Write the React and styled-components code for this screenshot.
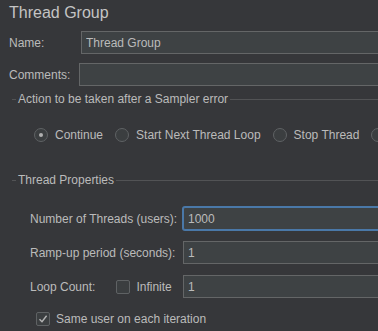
import React, { useState } from "react";
import styled, { createGlobalStyle } from "styled-components";

const GlobalStyle = createGlobalStyle`
  html, body {
    margin: 0;
    padding: 0;
    background: #36373a;
    overflow: hidden;
  }
  body {
    font-family: "Liberation Sans", Arial, sans-serif;
    font-size: 12px;
    color: #bbbbbb;
  }
`;

const Panel = styled.div`
  width: 420px;
  height: 331px;
  padding: 3px 0 0 9px;
  box-sizing: border-box;
  white-space: nowrap;
`;

const Title = styled.h1`
  margin: 0;
  font-size: 16px;
  font-weight: normal;
  line-height: 20px;
  color: #c4c4c4;
`;

const FieldRow = styled.div`
  display: flex;
  align-items: center;
  margin-top: ${(p) => p.$top}px;
`;

const Label = styled.label`
  width: ${(p) => p.$width}px;
  flex-shrink: 0;
`;

const Input = styled.input`
  flex: 1;
  min-width: 0;
  height: 23px;
  box-sizing: border-box;
  margin: 0;
  padding: 0 4px;
  background: #3e4244;
  border: 1px solid ${(p) => (p.$focus ? "#4a78a8" : "#646667")};
  box-shadow: ${(p) => (p.$focus ? "0 0 0 1px #4a78a8" : "none")};
  border-radius: ${(p) => (p.$focus ? "2px" : "0")};
  font-family: inherit;
  font-size: 12px;
  color: #bbbbbb;
  outline: none;
`;

const Group = styled.section`
  margin-top: ${(p) => p.$top}px;
`;

const Legend = styled.div`
  display: flex;
  align-items: center;
  gap: 2px;
  height: 16px;
  &::before {
    content: "";
    width: 4px;
    margin-left: 3px;
    border-top: 1px solid #525355;
  }
  &::after {
    content: "";
    flex: 1;
    border-top: 1px solid #525355;
  }
`;

const RadioRow = styled.div`
  display: flex;
  align-items: center;
  margin: 20px 0 0 25px;
  height: 16px;
`;

const RadioItem = styled.label`
  display: flex;
  align-items: center;
  gap: 7px;
  margin-right: 12px;
`;

const RadioCircle = styled.span`
  width: 14px;
  height: 14px;
  box-sizing: border-box;
  border-radius: 50%;
  border: 1px solid #5f6264;
  background: #3b3e40;
  display: flex;
  align-items: center;
  justify-content: center;
  &::after {
    content: "";
    width: 4px;
    height: 4px;
    border-radius: 50%;
    background: ${(p) => (p.$on ? "#b0b0b0" : "transparent")};
  }
`;

const PropsGrid = styled.div`
  display: grid;
  grid-template-columns: 153px 1fr;
  row-gap: 11px;
  align-items: center;
  margin: 19px 0 0 21px;
`;

const Inline = styled.div`
  display: flex;
  align-items: center;
`;

const CheckItem = styled.label`
  display: flex;
  align-items: center;
  gap: 6px;
  margin-left: ${(p) => p.$left || 0}px;
`;

const Box = styled.span`
  width: 14px;
  height: 14px;
  box-sizing: border-box;
  border: 1px solid #5f6264;
  border-radius: 2px;
  background: #3b3e40;
  display: flex;
  align-items: center;
  justify-content: center;
`;

const SameUser = styled.div`
  margin: 14px 0 0 27px;
`;

const Radio = ({ on, children }) => (
  <RadioItem>
    <RadioCircle $on={on} />
    {children}
  </RadioItem>
);

const Check = ({ checked, left, children }) => (
  <CheckItem $left={left}>
    <Box>
      {checked && (
        <svg width="10" height="10" viewBox="0 0 10 10">
          <path d="M1.5 5.2 L4 7.8 L8.6 1.8" fill="none" stroke="#b4b4b4" strokeWidth="1.4" />
        </svg>
      )}
    </Box>
    {children}
  </CheckItem>
);

export default function App() {
  const [name, setName] = useState("Thread Group");
  return (
    <>
      <GlobalStyle />
      <Panel>
        <Title>Thread Group</Title>
        <FieldRow $top={8}>
          <Label $width={72}>Name:</Label>
          <Input value={name} onChange={(e) => setName(e.target.value)} />
        </FieldRow>
        <FieldRow $top={9}>
          <Label $width={70}>Comments:</Label>
          <Input defaultValue="" />
        </FieldRow>

        <Group $top={5}>
          <Legend>Action to be taken after a Sampler error</Legend>
          <RadioRow>
            <Radio on>Continue</Radio>
            <Radio>Start Next Thread Loop</Radio>
            <Radio>Stop Thread</Radio>
            <Radio>Stop Test</Radio>
          </RadioRow>
        </Group>

        <Group $top={29}>
          <Legend>Thread Properties</Legend>
          <PropsGrid>
            <span>Number of Threads (users):</span>
            <Input $focus defaultValue="1000" />
            <span>Ramp-up period (seconds):</span>
            <Input defaultValue="1" />
            <Inline>
              <span>Loop Count:</span>
              <Check left={21}>Infinite</Check>
            </Inline>
            <Input defaultValue="1" />
          </PropsGrid>
          <SameUser>
            <Check checked>Same user on each iteration</Check>
          </SameUser>
        </Group>
      </Panel>
    </>
  );
}
